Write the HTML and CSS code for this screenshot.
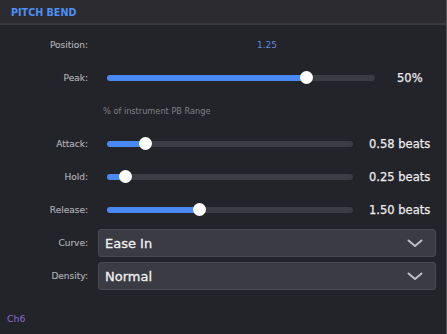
FILE: index.html
```html
<!DOCTYPE html>
<html>
<head>
<meta charset="utf-8">
<link rel="stylesheet" href="styles.css">
</head>
<body>
<div class="panel">
  <div class="header"><span class="title">PITCH BEND</span></div>
  <div class="body">
    <div class="row">
      <div class="label">Position:</div>
      <div class="posval">1.25</div>
    </div>
    <div class="row">
      <div class="label">Peak:</div>
      <div class="track"><div class="fill" style="width:74.6%"></div><div class="thumb" style="left:74.6%"></div></div>
      <div class="value peakval">50%</div>
    </div>
    <div class="row">
      <div class="note">% of instrument PB Range</div>
    </div>
    <div class="row">
      <div class="label">Attack:</div>
      <div class="track"><div class="fill" style="width:15.6%"></div><div class="thumb" style="left:15.6%"></div></div>
      <div class="value">0.58 beats</div>
    </div>
    <div class="row">
      <div class="label">Hold:</div>
      <div class="track"><div class="fill" style="width:7.4%"></div><div class="thumb" style="left:7.4%"></div></div>
      <div class="value">0.25 beats</div>
    </div>
    <div class="row">
      <div class="label">Release:</div>
      <div class="track"><div class="fill" style="width:37.8%"></div><div class="thumb" style="left:37.8%"></div></div>
      <div class="value">1.50 beats</div>
    </div>
    <div class="selects">
      <div class="srow">
        <div class="label">Curve:</div>
        <div class="select"><span>Ease In</span>
          <svg class="chev" width="16" height="9" viewBox="0 0 16 9"><path d="M1.5 1.5 L8 7 L14.5 1.5" fill="none" stroke="#bfc0c4" stroke-width="2" stroke-linecap="round" stroke-linejoin="round"/></svg>
        </div>
      </div>
      <div class="srow">
        <div class="label">Density:</div>
        <div class="select"><span>Normal</span>
          <svg class="chev" width="16" height="9" viewBox="0 0 16 9"><path d="M1.5 1.5 L8 7 L14.5 1.5" fill="none" stroke="#bfc0c4" stroke-width="2" stroke-linecap="round" stroke-linejoin="round"/></svg>
        </div>
      </div>
    </div>
    <div class="footer">Ch6</div>
  </div>
</div>
</body>
</html>
```
FILE: styles.css
```css
html, body {
  margin: 0;
  padding: 0;
  background: #23232a;
}
body {
  width: 447px;
  height: 334px;
  overflow: hidden;
  font-family: "DejaVu Sans", sans-serif;
}
.panel {
  width: 446px;
  height: 334px;
  border-right: 1px solid #55565c;
  background: #23232a;
}
.header {
  height: 23px;
  background: #2b2b30;
  border-bottom: 2px solid #3a3a3f;
  display: flex;
  align-items: center;
  padding-left: 11px;
  box-sizing: content-box;
}
.title {
  color: #4d8ff3;
  font-weight: bold;
  font-size: 9.6px;
  padding-top: 2px;
}
.body {
  padding-top: 3px;
}
.row {
  height: 33px;
  display: flex;
  align-items: center;
}
.label {
  width: 88px;
  flex: none;
  text-align: right;
  color: #b0b0b4;
  font-size: 9px;
  -webkit-text-stroke: 0.15px #b0b0b4;
}
.posval {
  margin-left: 169px;
  color: #5b8bdb;
  font-size: 9px;
}
.track {
  position: relative;
  flex: 1;
  margin-left: 19px;
  height: 6px;
  border-radius: 3px;
  background: #3b3c44;
}
.fill {
  position: absolute;
  left: 0;
  top: 0;
  bottom: 0;
  border-radius: 3px;
  background: #4a88f2;
}
.thumb {
  position: absolute;
  top: 50%;
  width: 13px;
  height: 13px;
  margin-left: -6.5px;
  margin-top: -6.5px;
  border-radius: 50%;
  background: #ffffff;
}
.value {
  width: 93px;
  flex: none;
  box-sizing: border-box;
  padding-left: 16px;
  color: #ececee;
  font-size: 11.5px;
  -webkit-text-stroke: 0.25px #ececee;
}
.peakval {
  width: 71px;
  padding-left: 22px;
}
.note {
  margin-left: 103px;
  color: #808085;
  font-size: 8.2px;
}
.selects {
  margin-top: 3px;
  display: flex;
  flex-direction: column;
  gap: 5px;
}
.srow {
  display: flex;
  align-items: center;
}
.srow .label {
  width: 88px;
}
.select {
  margin-left: 10px;
  width: 338px;
  height: 28px;
  box-sizing: border-box;
  border: 1px solid #4a4b52;
  border-radius: 3px;
  background: #3a3b43;
  display: flex;
  align-items: center;
  justify-content: space-between;
  padding-left: 6px;
  padding-right: 12px;
  color: #f0f0f2;
  font-size: 13px;
  -webkit-text-stroke: 0.3px #f0f0f2;
}
.chev {
  display: block;
}
.footer {
  margin-top: 23px;
  margin-left: 7px;
  color: #8b6fd6;
  font-size: 9.3px;
}
```
